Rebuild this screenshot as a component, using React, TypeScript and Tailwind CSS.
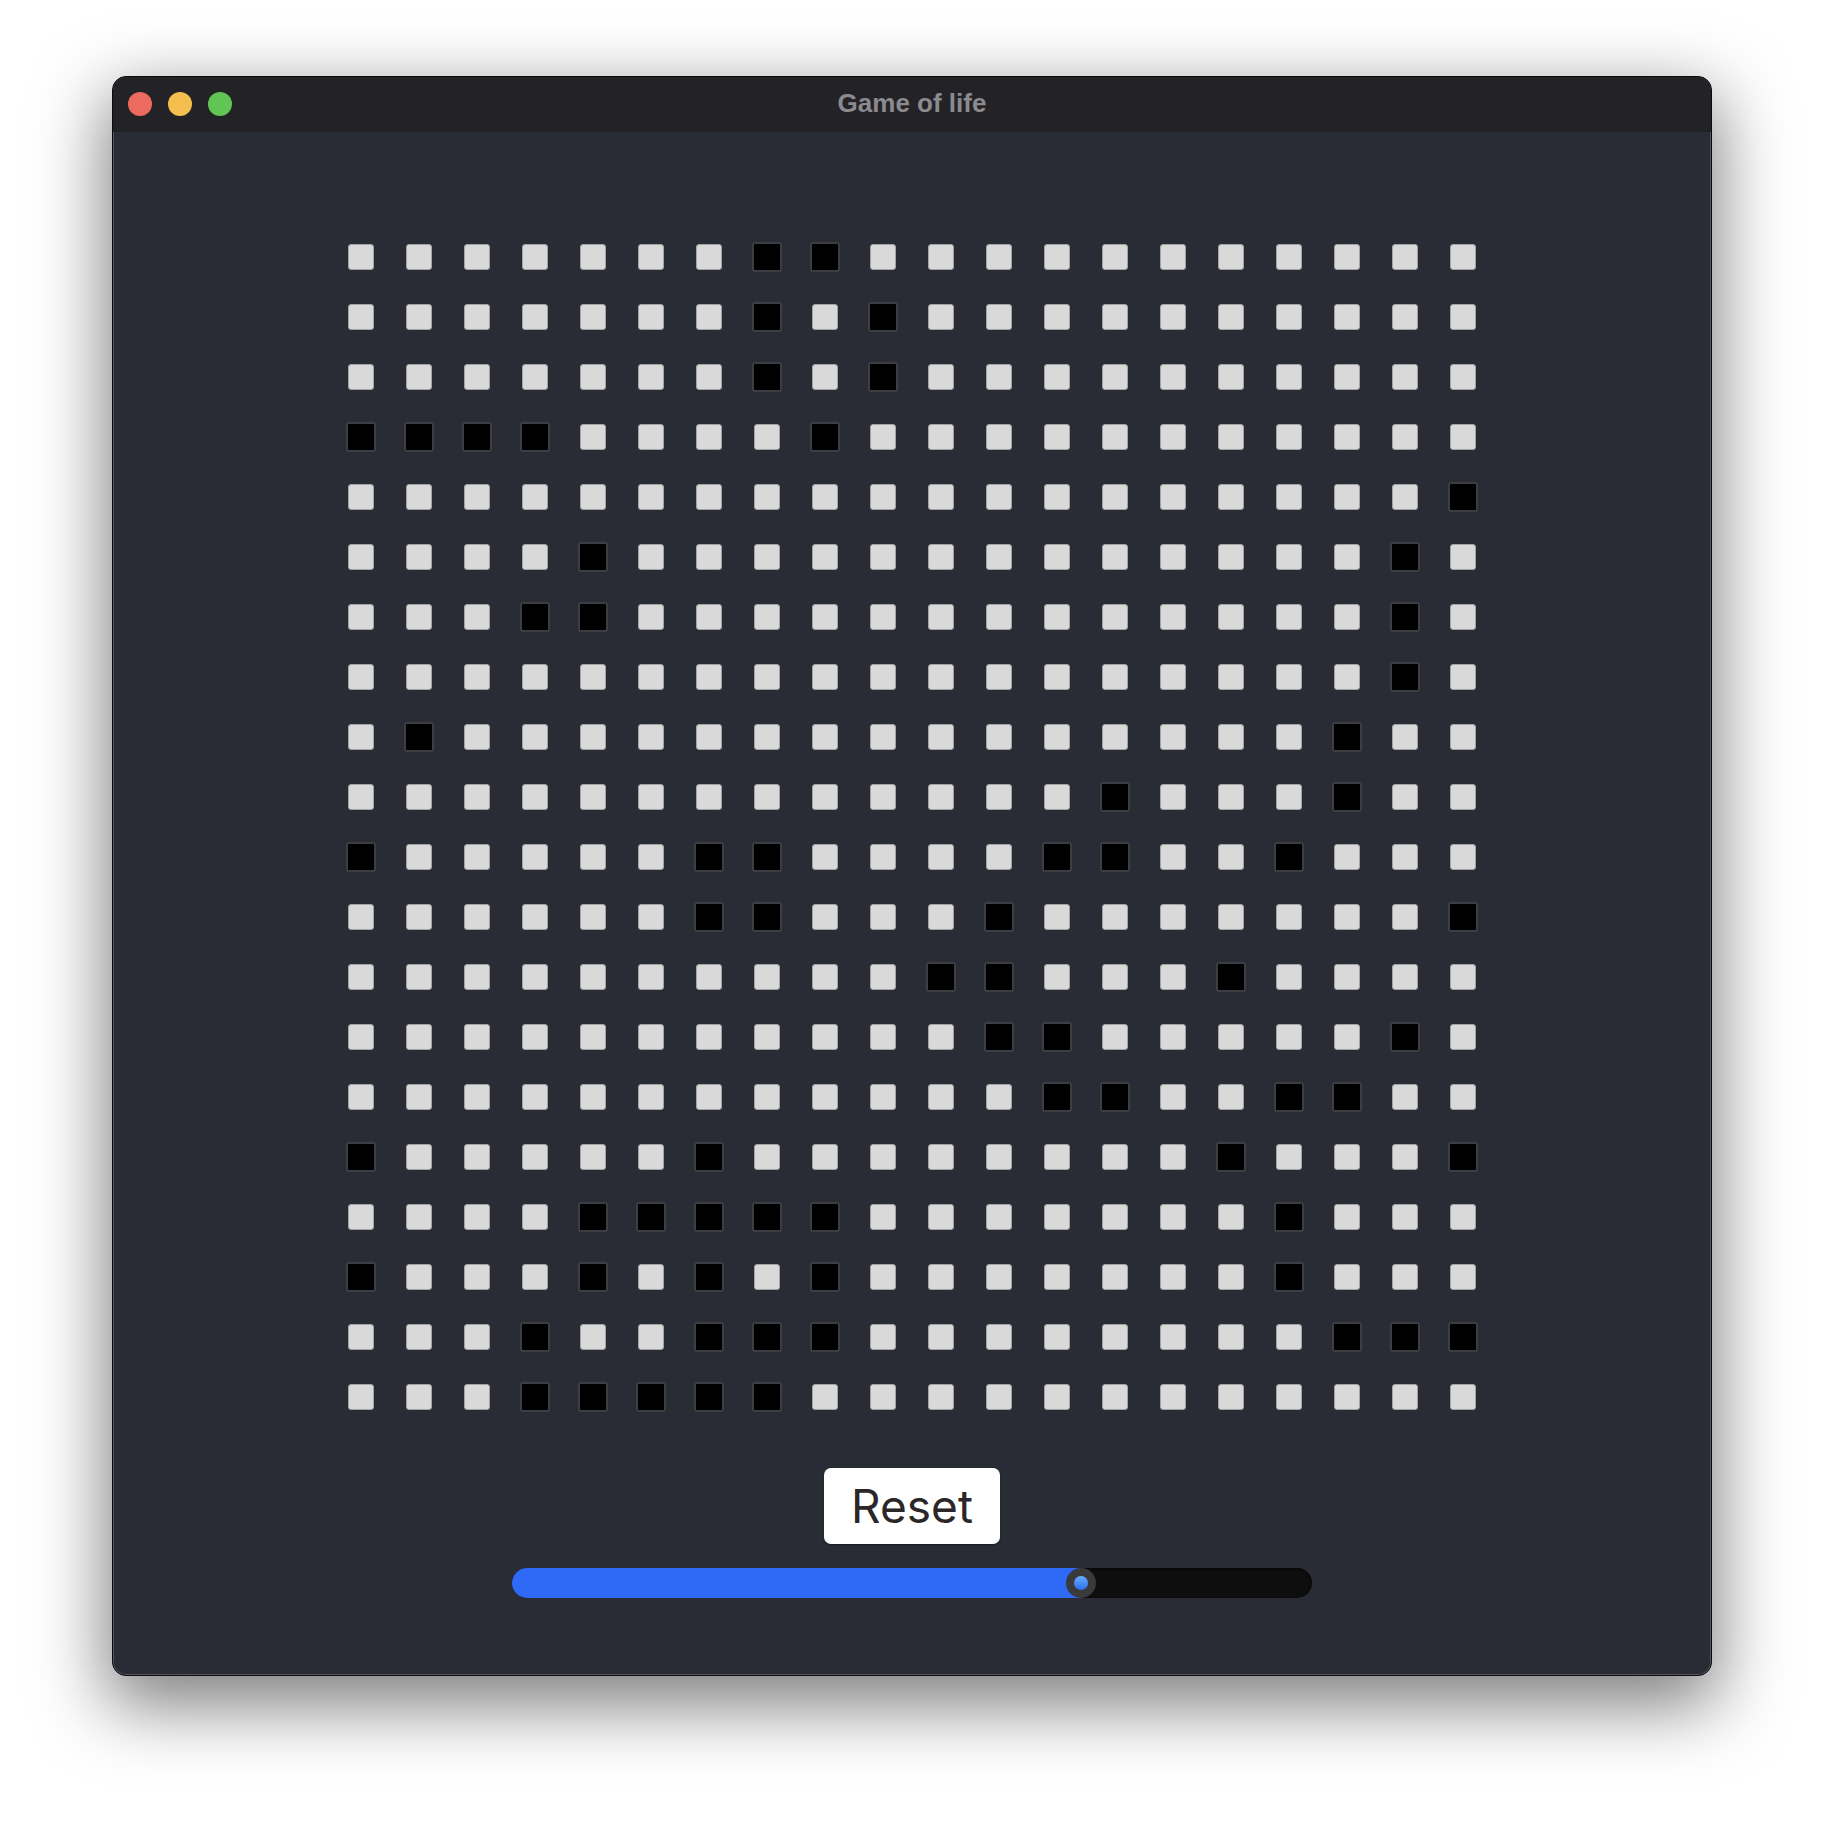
const live: number[][] = [
  [7, 8],
  [7, 9],
  [7, 9],
  [0, 1, 2, 3, 8],
  [19],
  [4, 18],
  [3, 4, 18],
  [18],
  [1, 17],
  [13, 17],
  [0, 6, 7, 12, 13, 16],
  [6, 7, 11, 19],
  [10, 11, 15],
  [11, 12, 18],
  [12, 13, 16, 17],
  [0, 6, 15, 19],
  [4, 5, 6, 7, 8, 16],
  [0, 4, 6, 8, 16],
  [3, 6, 7, 8, 17, 18, 19],
  [3, 4, 5, 6, 7],
];

const SIZE = 20;
const sliderValue = 0.72;

function Cell({ alive }: { alive: boolean }) {
  if (alive) {
    return <div className="w-[30px] h-[30px] rounded-[3px] bg-black border-2 border-[#3c3e44]" />;
  }
  return <div className="w-[26px] h-[26px] rounded-[3px] bg-[#d9d9d9] border border-[#a3a3a3]" />;
}

export default function App() {
  const cells = [];
  for (let r = 0; r < SIZE; r++) {
    for (let c = 0; c < SIZE; c++) {
      cells.push(<Cell key={`${r}-${c}`} alive={live[r].includes(c)} />);
    }
  }

  return (
    <div className="w-full h-[1824px] bg-white flex justify-center pt-[76px]">
      {/* Window */}
      <div className="w-[1600px] h-[1600px] rounded-[14px] border border-[#0b0b0c] bg-[#292c34] overflow-hidden flex flex-col shadow-[0_24px_70px_6px_rgba(0,0,0,0.5),inset_0_0_0_1px_rgba(255,255,255,0.2)]">
        {/* Title bar */}
        <div className="relative h-[55px] shrink-0 bg-[#232227] flex items-center px-[15px]">
          <div className="flex gap-4 -mt-[1px]">
            <span className="w-6 h-6 rounded-full bg-[#ed6a5e]" />
            <span className="w-6 h-6 rounded-full bg-[#f5bf4f]" />
            <span className="w-6 h-6 rounded-full bg-[#61c554]" />
          </div>
          <div className="absolute inset-0 flex items-center justify-center pb-[3px] pointer-events-none">
            <span className="text-[26px] font-bold text-[#8b8a8f] font-['Liberation_Sans',Arial,sans-serif]">
              Game of life
            </span>
          </div>
        </div>

        {/* Content */}
        <div className="flex-1 flex flex-col items-center pt-[112px]">
          <div className="grid grid-cols-[repeat(20,26px)] auto-rows-[26px] gap-x-[32px] gap-y-[34px] place-items-center">
            {cells}
          </div>

          <button className="mt-[58px] w-[176px] h-[76px] rounded-[7px] bg-white text-[#2b2627] text-[46px] leading-none font-['Inter',sans-serif] shadow-[0_1px_2px_rgba(0,0,0,0.4)] flex items-center justify-center">
            Reset
          </button>

          {/* Slider */}
          <div className="relative mt-[24px] w-[800px] h-[30px] rounded-full bg-[#0e0e0e] shadow-[inset_0_1px_3px_rgba(0,0,0,0.6)]">
            <div
              className="absolute left-0 top-0 h-full rounded-l-full bg-[#2e6af5]"
              style={{ width: 15 + sliderValue * 770 }}
            />
            <div
              className="absolute top-0 w-[30px] h-[30px] rounded-full bg-[#3a3a3c] flex items-center justify-center"
              style={{ left: sliderValue * 770 }}
            >
              <div className="w-[14px] h-[14px] rounded-full bg-gradient-to-b from-[#68acff] to-[#2f6cf0]" />
            </div>
          </div>
        </div>
      </div>
    </div>
  );
}
